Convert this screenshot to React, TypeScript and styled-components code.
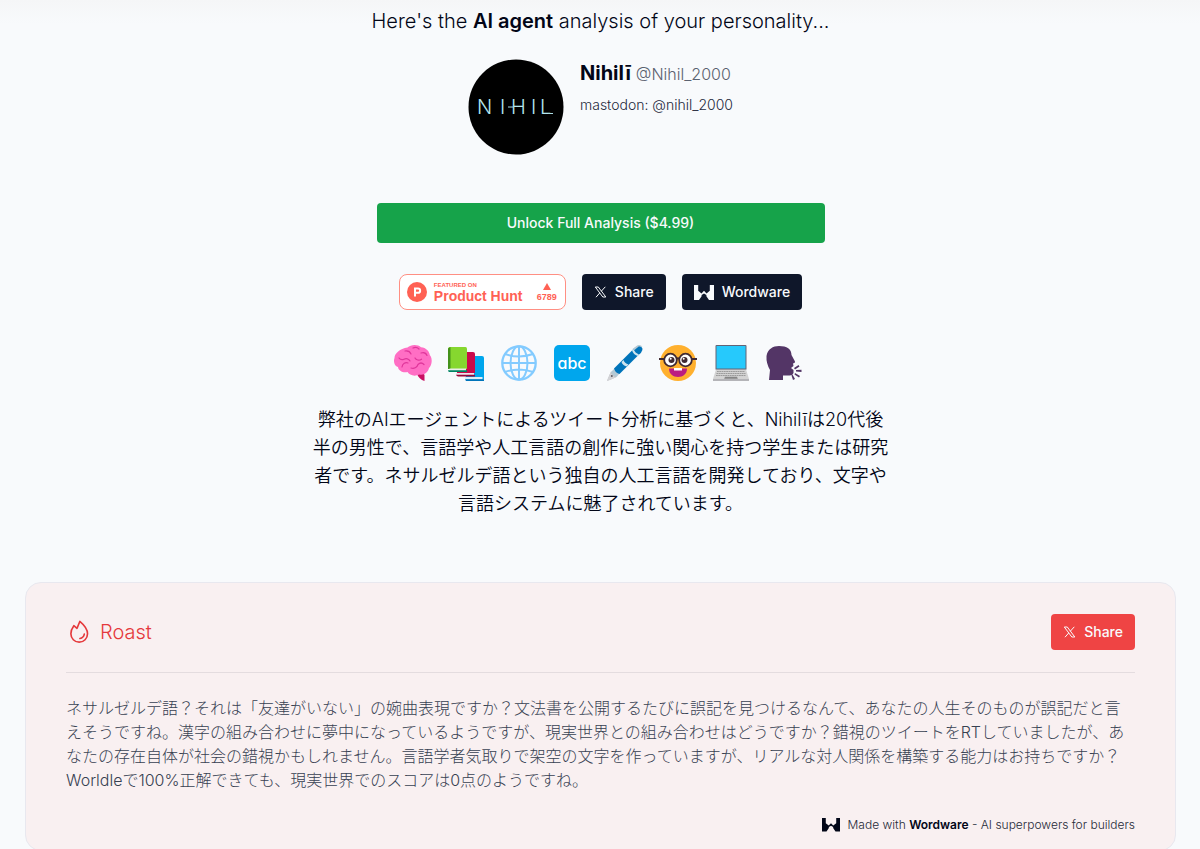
import React from "react";
import styled, { createGlobalStyle, css } from "styled-components";

const GlobalStyle = createGlobalStyle`
  * { box-sizing: border-box; }
  body {
    margin: 0;
    background: #f8fafc;
    color: #020617;
    font-family: Inter, "Noto Sans CJK JP", "Liberation Sans", sans-serif;
    font-weight: 300;
  }
  h1, h2, h3, p { margin: 0; }
`;

const Page = styled.div`
  background: linear-gradient(#f5f6f7, #f8fafc 24px);
  padding: 7px 24px 0 25px;
`;

const Hero = styled.header`
  display: flex;
  flex-direction: column;
  align-items: center;
`;

const Title = styled.h1`
  font-size: 20px;
  line-height: 28px;
  font-weight: 300;
  strong { font-weight: 600; }
`;

const Profile = styled.section`
  display: flex;
  gap: 16px;
  margin-top: 24px;
`;

const Avatar = styled.svg`
  width: 96px;
  height: 96px;
`;

const ProfileText = styled.div`
  font-size: 14px;
  line-height: 20px;
  color: #1e293b;
`;

const NameRow = styled.h2`
  display: flex;
  align-items: baseline;
  gap: 5px;
  margin-bottom: 7px;
  font-size: 20px;
  line-height: 28px;
  font-weight: 700;
  color: #020617;
`;

const Handle = styled.a`
  font-size: 16px;
  font-weight: 300;
  color: #5b6270;
  text-decoration: none;
`;

const UnlockButton = styled.button`
  width: 100%;
  max-width: 448px;
  height: 40px;
  margin-top: 48px;
  border: 0;
  border-radius: 4px;
  background: #16a34a;
  color: #f8fafc;
  font: 500 14px/20px Inter, sans-serif;
`;

const Actions = styled.div`
  display: flex;
  flex-wrap: wrap;
  justify-content: center;
  gap: 16px;
  margin-top: 31px;
`;

const buttonLook = css<{ $tone: string }>`
  display: inline-flex;
  align-items: center;
  height: 36px;
  padding: 0 12px;
  border: 0;
  border-radius: 4px;
  background: ${(p) => p.$tone};
  color: #f8fafc;
  font: 500 14px/20px Inter, sans-serif;
  text-decoration: none;
`;

const ActionButton = styled.button<{ $tone: string }>`
  ${buttonLook}
  gap: 8px;
`;

const ActionLink = styled.a<{ $tone: string }>`
  ${buttonLook}
  gap: 8px;
`;

const HuntBadge = styled.a`
  display: flex;
  align-items: center;
  gap: 7px;
  width: 167px;
  height: 36px;
  padding: 0 8px 0 7px;
  border: 1px solid #ff8f83;
  border-radius: 8px;
  background: #fff;
  color: #ff6154;
  font-family: "Liberation Sans", sans-serif;
  font-weight: 700;
  text-decoration: none;
`;

const HuntLabel = styled.span`
  display: flex;
  flex-direction: column;
  flex: 1;
  font-size: 14px;
  line-height: 14px;
  white-space: nowrap;
  small {
    font-size: 6px;
    line-height: 7px;
  }
`;

const HuntVotes = styled.span`
  display: flex;
  flex-direction: column;
  align-items: center;
  gap: 3px;
  font-size: 9px;
  line-height: 9px;
`;

const EmojiRow = styled.div`
  display: flex;
  flex-wrap: wrap;
  justify-content: center;
  gap: 17px;
  margin-top: 35px;
  padding-right: 4px;
  svg { width: 36px; height: 36px; overflow: visible; }
`;

const Summary = styled.p`
  max-width: 576px;
  margin-top: 25px;
  font-size: 18px;
  line-height: 28px;
  text-align: center;
  font-weight: 350;
`;

const Card = styled.article`
  margin-top: 64px;
  padding: 31px 40px 16px;
  border: 1px solid #e8e8ef;
  border-radius: 16px;
  background: #f9f0f1;
`;

const CardHead = styled.div`
  display: flex;
  align-items: center;
  justify-content: space-between;
  padding-bottom: 22px;
  border-bottom: 1px solid #e4dcdf;
`;

const CardTitle = styled.h3`
  display: flex;
  align-items: center;
  gap: 8px;
  font-size: 20px;
  line-height: 28px;
  font-weight: 300;
  color: #e5393c;
`;

const CardBody = styled.p`
  margin-top: 23px;
  font-size: 16px;
  line-height: 24px;
  color: #374151;
`;

const MadeWith = styled.a`
  display: flex;
  align-items: center;
  justify-content: flex-end;
  gap: 8px;
  margin-top: 24px;
  font-size: 12px;
  line-height: 18px;
  color: #1f2937;
  text-decoration: none;
  svg { color: #020617; }
  strong { font-weight: 600; color: #020617; }
`;

const XIcon = () => (
  <svg width="13" height="12" viewBox="0 0 13 12" fill="none" stroke="currentColor" aria-hidden="true">
    <path d="M1.300 1H4.300L11.800 11H8.800ZM11.300 .8 7.300 5.200M5.800 6.900 2 11.200" strokeWidth="1" />
  </svg>
);

const WordwareMark = ({ width = 20 }: { width?: number }) => (
  <svg width={width} height={(width * 3) / 4} viewBox="0 0 20 15" fill="currentColor" aria-hidden="true">
    <path d="M0 0H4.200V5.800L7.500 8.400 10 5.800 12.500 8.400 15.800 5.800V0H20V15H15L12.400 11.200V10L10 8.600 7.600 10V11.200L5 15H0Z" />
  </svg>
);

const Flame = () => (
  <svg width="26" height="26" viewBox="0 0 256 256" fill="none" stroke="currentColor" strokeWidth="16" strokeLinecap="round" strokeLinejoin="round" aria-hidden="true">
    <path d="M108 92 136 24C160 44 212 91 212 146A82 82 0 0 1 48 146C48 117 58 92 77 66Z" />
    <path d="M137 192C158 188 176 171 180 149" />
  </svg>
);

const Brain = () => (
  <svg viewBox="0 0 36 36" aria-hidden="true">
    <path d="M22 29 28 27.500 29.500 30V36C26 35 23 32 22 29Z" fill="#c90f63" />
    <path d="M12.500 2.500C16-1 23-.8 26 2.200 31 2.500 34.500 6.500 34.800 10 38 14 36.800 20.500 34 23 33 27.500 29 30.500 24.500 29.500 19 32 14.500 30 12.500 27 8 28 3.500 26 3 22-.5 21-1.800 16.500-.5 13-.5 8.500 5 3.500 12.500 2.500Z" fill="#ff6ec4" />
    <path d="M10 6c3-.5 5 .6 6 3M18 3c3-1.500 5 0 6 1M26 8c3-1 5 0 6 2.500M4 13c1.500 2 3 2.200 5 1.200s5-.5 6 1.800M7 22c.5-3.500 3.500-5 6-4M16 23c3 1 6-.3 7-3.500 2-2 4-2 6 0M20 13c1 2 4 3 6.500 1.200" fill="none" stroke="#e0369b" strokeWidth="1.200" strokeLinecap="round" />
  </svg>
);

const Books = () => (
  <svg viewBox="0 0 36 36" aria-hidden="true">
    <path d="M17 11H34Q36 11 36 13V34L34 36H18Z" fill="#00a6ed" />
    <path d="M17 32H34.500V34.500H18Z" fill="#e1edf5" />
    <path d="M17 34.300H36V36H18Z" fill="#0074ba" />
    <path d="M9 7H25Q27 7 27 9V28H9Z" fill="#ca0b4a" />
    <path d="M8 28H26V30H9Z" fill="#f1e4ec" />
    <path d="M8 29.700H27V31.500H10Q8 31 8 29Z" fill="#990838" />
    <path d="M1 2H17.500Q19 2 19 4V24H0V3.500Z" fill="#86d72f" />
    <path d="M0 3.500 2.500 2V24H0Z" fill="#44911b" />
    <path d="M1.500 23.500H18V26H1.500Z" fill="#e9efe8" />
    <path d="M0 25.300H19V27H1Q0 26.500 0 25.300Z" fill="#008463" />
  </svg>
);

const Globe = () => (
  <svg viewBox="0 0 36 36" fill="none" stroke="#83cbff" strokeWidth="2" aria-hidden="true">
    <circle cx="18" cy="18" r="16.700" strokeWidth="2.300" />
    <ellipse cx="18" cy="18" rx="8.500" ry="16.700" />
    <path d="M18 1V35M1 18H35M4 9Q18 14 32 9M4 27Q18 22 32 27" />
  </svg>
);

const Letters = () => (
  <svg viewBox="0 0 36 36" aria-hidden="true">
    <rect width="36" height="36" rx="5" fill="#00a6ed" />
    <text x="18" y="24" textAnchor="middle" fill="#fff" fontFamily="Inter, sans-serif" fontWeight="500" fontSize="16" style={{ fontFeatureSettings: '"cv11"' }}>abc</text>
  </svg>
);

const Pen = () => (
  <svg viewBox="0 0 36 36" aria-hidden="true">
    <path d="M0 36 4 26.500 9.500 32Z" fill="#b8b8bd" />
    <path d="M3.500 27.500 8.500 32.500 3 35 1 35.500.5 34.500Z" fill="#d3d3d6" />
    <path d="M4 27 8.500 22.500 13.500 27.500 9.500 32Q5.500 31 4 27Z" fill="#b4c9d5" />
    <path d="M7 23.500 26.500 4 32 9.500 12.500 29Q8.500 28 7 23.500Z" fill="#0074ba" />
    <path d="M26 4.500Q30.500-.5 34 1.500 38 5 31.500 10Z" fill="#0074ba" />
    <path d="M14.500 17 16.500 15Q17.500 18 21.500 19.500L19.500 21.500Q15.500 20 14.500 17ZM25 5.500 26.500 4Q28 8 32 9.500L30.500 11Q26.500 9.500 25 5.500Z" fill="#cde3ee" />
    <path d="M25.500 4 30.500 .2Q34-.6 35.500 2L32 1.200 27.500 5Z" fill="#b4c9d5" />
    <circle cx="4.800" cy="31" r="1" fill="#5a5963" />
  </svg>
);

const Nerd = () => (
  <svg viewBox="0 0 36 36" aria-hidden="true">
    <circle cx="18" cy="18" r="18" fill="#ffb02e" />
    <path d="M9 23.500H27C27 29 23 32 18 32S9 29 9 23.500Z" fill="#bb1d80" />
    <path d="M14 23H22V25.500H14Z" fill="#fff" />
    <circle cx="10.500" cy="15" r="6.300" fill="#fff" stroke="#402a32" strokeWidth="1.800" />
    <circle cx="25.500" cy="15" r="6.300" fill="#fff" stroke="#402a32" strokeWidth="1.800" />
    <path d="M-1 14H4M32 14H37M16.500 14Q18 12.500 19.500 14" fill="none" stroke="#402a32" strokeWidth="1.800" />
    <circle cx="11.500" cy="15" r="3" fill="#402a32" />
    <circle cx="24.500" cy="15" r="3" fill="#402a32" />
    <circle cx="10.700" cy="13.800" r="1" fill="#fff" />
    <circle cx="23.700" cy="13.800" r="1" fill="#fff" />
  </svg>
);

const Laptop = () => (
  <svg viewBox="0 0 36 36" aria-hidden="true">
    <rect x="2.500" width="31" height="25" rx="1" fill="#636375" />
    <rect x="3.500" y="1" width="29" height="22.500" fill="#26c9fc" />
    <path d="M3 24.500H33L36 34H0Z" fill="#d3d3d3" />
    <path d="M0 34H36V36H0Z" fill="#b4b4b8" />
    <path d="M4 26.500H32M3.500 28.500H32.500M3 30.500H33" stroke="#9b9b9b" strokeWidth="1.200" strokeDasharray="1.800 .5" />
    <path d="M12 31.800H24L24.800 33.800H11.200Z" fill="#868686" />
  </svg>
);

const Speaking = () => (
  <svg viewBox="0 0 36 36" aria-hidden="true" fill="#533566">
    <path d="M3 35 4 25Q0 18 .500 11C1.500 4 7 1 13 1 21 1 25.500 4 25.500 10L29 16.500Q29.500 18 27 18.500L27.500 21 25 23 27.500 25V28Q26.500 31 22.500 30.500L17 30.500V35Z" />
    <path d="M28 23 32.500 20 33.500 21.500 29 24.500ZM30 25 35.500 24.800V27L30 26.500ZM29 28 34 31 33 32.500 28.500 29.500ZM26.500 29.500 29 34 27 35 25.500 30.500Z" />
  </svg>
);

const emojis = [Brain, Books, Globe, Letters, Pen, Nerd, Laptop, Speaking];

export default function App() {
  return (
    <>
      <GlobalStyle />
      <Page>
        <Hero>
          <Title>
            Here's the <strong>AI agent</strong> analysis of your personality...
          </Title>
          <Profile>
            <Avatar viewBox="0 0 96 96" role="img" aria-label="Nihilī">
              <circle cx="48" cy="48" r="47.500" fill="#000" />
              <text x="9 32 43 63 72" y="55" fill="#b5e6ee" fontFamily="Inter, sans-serif" fontWeight="300" fontSize="20">NIHIL</text>
              <path d="M40 48H46M80 54.500H85" stroke="#a9dbe3" />
            </Avatar>
            <ProfileText>
              <NameRow>
                Nihilī <Handle href="#profile">@Nihil_2000</Handle>
              </NameRow>
              <p>mastodon: @nihil_2000</p>
            </ProfileText>
          </Profile>
          <UnlockButton type="button">Unlock Full Analysis ($4.99)</UnlockButton>
          <Actions>
            <HuntBadge href="#product-hunt">
              <svg width="20" height="20" viewBox="0 0 20 20" aria-hidden="true">
                <circle cx="10" cy="10" r="10" fill="#ff6154" />
                <path d="M8 10.800V6.500H11A2.100 2.100 0 0 1 11 10.800H8V14.500" fill="none" stroke="#fff" strokeWidth="2" />
              </svg>
              <HuntLabel>
                <small>FEATURED ON</small>
                Product Hunt
              </HuntLabel>
              <HuntVotes>
                <svg width="8" height="7" viewBox="0 0 8 7" fill="currentColor" aria-hidden="true">
                  <path d="M4 0 8 7H0Z" />
                </svg>
                6789
              </HuntVotes>
            </HuntBadge>
            <ActionButton type="button" $tone="#0f172a">
              <XIcon />
              Share
            </ActionButton>
            <ActionLink href="#wordware" $tone="#0f172a">
              <WordwareMark />
              Wordware
            </ActionLink>
          </Actions>
          <EmojiRow>
            {emojis.map((Emoji, i) => (
              <Emoji key={i} />
            ))}
          </EmojiRow>
          <Summary lang="ja">
            弊社のAIエージェントによるツイート分析に基づくと、Nihilīは20代後半の男性で、言語学や人工言語の創作に強い関心を持つ学生または研究者です。ネサルゼルデ語という独自の人工言語を開発しており、文字や言語システムに魅了されています。
          </Summary>
        </Hero>
        <Card>
          <CardHead>
            <CardTitle>
              <Flame />
              Roast
            </CardTitle>
            <ActionButton type="button" $tone="#ef4444">
              <XIcon />
              Share
            </ActionButton>
          </CardHead>
          <CardBody lang="ja">
            ネサルゼルデ語？それは「友達がいない」の婉曲表現ですか？文法書を公開するたびに誤記を見つけるなんて、あなたの人生そのものが誤記だと言えそうですね。漢字の組み合わせに夢中になっているようですが、現実世界との組み合わせはどうですか？錯視のツイートをRTしていましたが、あなたの存在自体が社会の錯視かもしれません。言語学者気取りで架空の文字を作っていますが、リアルな対人関係を構築する能力はお持ちですか？Worldleで100%正解できても、現実世界でのスコアは0点のようですね。
          </CardBody>
          <MadeWith href="#wordware">
            <WordwareMark width={18} />
            <span>
              Made with <strong>Wordware</strong> - AI superpowers for builders
            </span>
          </MadeWith>
        </Card>
      </Page>
    </>
  );
}
